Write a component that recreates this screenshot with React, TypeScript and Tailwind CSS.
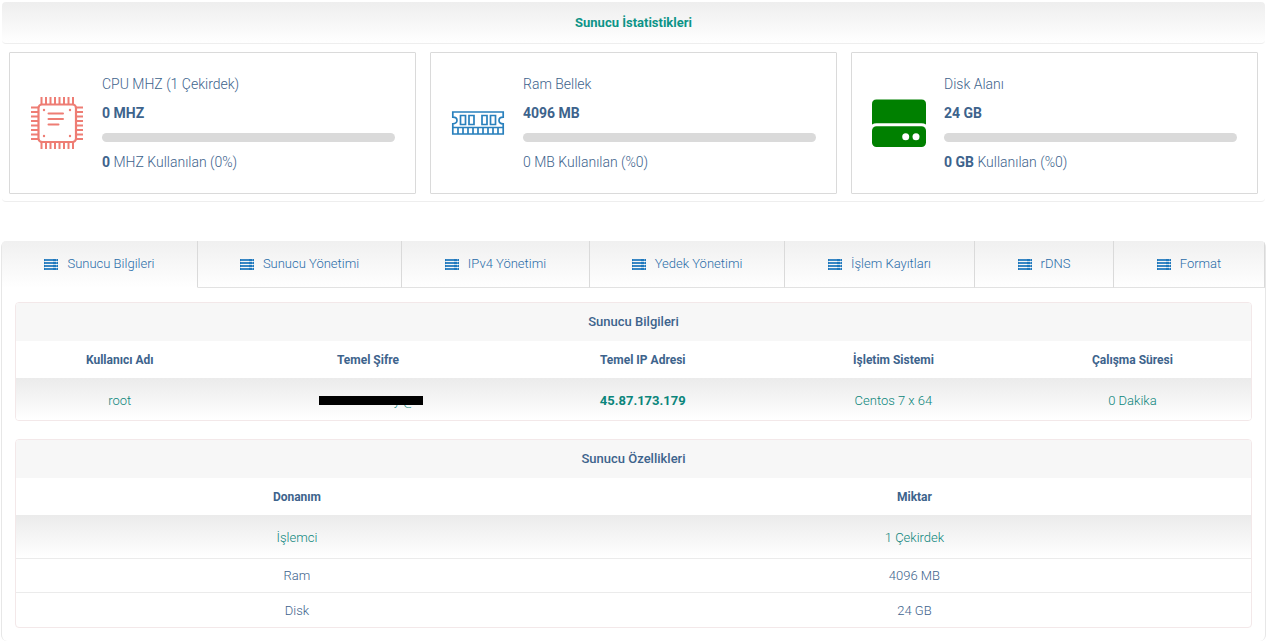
import type { ReactNode } from 'react';

function CpuIcon() {
  const pins = [11.5, 16, 20.5, 25, 29.5, 34, 38.5, 43];
  return (
    <svg viewBox="0 1 54 54" className="h-[54px] w-[54px] shrink-0" fill="none" stroke="#ee7d74" aria-hidden="true">
      {pins.map((p) => (
        <path key={p} strokeWidth="2" d={`M${p} 1v7M${p} 46v7M1 ${p}h7M46 ${p}h7`} />
      ))}
      <rect x="8.5" y="8.5" width="37.500" height="37.500" rx="3.500" strokeWidth="2.200" fill="#fff" />
      <path strokeWidth="2" strokeLinecap="round" d="M18.5 17.500h14.500M18.5 23h14.500M18.5 28.500h10" />
      <g fill="#ee7d74" stroke="none">
        <circle cx="14" cy="14" r="1.200" />
        <circle cx="40" cy="14" r="1.200" />
        <circle cx="14" cy="40" r="1.200" />
        <circle cx="40" cy="40" r="1.200" />
      </g>
    </svg>
  );
}

function RamIcon() {
  return (
    <svg viewBox="0 1 54 54" className="h-[54px] w-[54px] shrink-0" fill="none" stroke="#2980bd" strokeWidth="1.700" aria-hidden="true">
      <path d="M1.800 16h50.400v5.200c-2.400 0-4.200 1.200-4.200 3.300s1.800 3.300 4.200 3.300V38H1.800V27.800c2.400 0 4.200-1.200 4.200-3.300s-1.800-3.300-4.200-3.300z" />
      <path d="M1.800 31.500h50.400M7 31.500v6.500M12 31.500v6.500M17 31.500v6.500M22 31.500v6.500M27 31.500v6.500M32 31.500v6.500M37 31.500v6.500M42 31.500v6.500M47 31.500v6.500" />
      <path d="M9.500 19.500h5v9h-5zM18 19.500h5v9h-5zM31 19.500h5v9h-5zM39.500 19.500h5v9h-5z" />
    </svg>
  );
}

function DiskIcon() {
  return (
    <svg viewBox="0 1 54 54" className="h-[54px] w-[54px] shrink-0" fill="#008000" aria-hidden="true">
      <path d="M0 28.500V8q0-4.500 4.500-4.500h45Q54 3.500 54 8v20.500Q52 27.300 49.500 27.300h-45Q2 27.300 0 28.500z" />
      <rect x="0" y="30.300" width="54" height="20.700" rx="4.500" />
      <circle cx="33.700" cy="40.700" r="3.500" fill="#fff" />
      <circle cx="44" cy="40.700" r="3.500" fill="#fff" />
    </svg>
  );
}

function TabIcon() {
  const rows = [0, 3, 6, 9];
  return (
    <svg viewBox="0 0 14 11" className="h-[11px] w-[14px] shrink-0" fill="#1f78bd" aria-hidden="true">
      {rows.map((y) => (
        <g key={y}>
          <rect x="0" y={y} width="14" height="2" />
          <rect x="1" y={y + 0.6} width="8" height="0.800" fill="#fff" opacity="0.300" />
          <rect x="12" y={y + 0.4} width="1" height="1" fill="#fff" opacity="0.500" />
        </g>
      ))}
      <path d="M0 2h1v7H0zM13 2h1v7h-1zM9 2h3v7H9z" opacity="0.200" />
    </svg>
  );
}

function StatCard({ icon, label, total, used }: { icon: ReactNode; label: string; total: string; used: ReactNode }) {
  return (
    <div className="flex items-center gap-[18px] rounded-[1px] border border-[#dadada] px-5 pt-[17px] pb-4">
      {icon}
      <div className="min-w-0 flex-1 text-sm leading-[29px]">
        <p>{label}</p>
        <p className="font-bold">{total}</p>
        <div className="mt-[5px] mb-1.5 h-[9px] rounded-full bg-[#dadada]" />
        <p>{used}</p>
      </div>
    </div>
  );
}

const tabs = ['Sunucu Bilgileri', 'Sunucu Yönetimi', 'IPv4 Yönetimi', 'Yedek Yönetimi', 'İşlem Kayıtları', 'rDNS', 'Format'];

function Section({ title, children }: { title: string; children: ReactNode }) {
  return (
    <section className="overflow-hidden rounded border border-[#f3e8e9]">
      <h2 className="bg-[#f7f7f7] text-center text-[13px] leading-[38px] font-medium">{title}</h2>
      {children}
    </section>
  );
}

export default function App() {
  return (
    <div className="bg-white pt-0.5 font-['Roboto',sans-serif] font-light text-[#3d638c]">
      <section className="mr-[3px] ml-0.5 rounded border-b border-[#eeeeee]">
        <h1 className="rounded border-b border-[#eeeeee] bg-linear-to-b from-[#eeeeee] to-white text-center text-[13px] leading-[41px] font-bold text-[#0d9488]">
          Sunucu İstatistikleri
        </h1>
        <div className="grid grid-cols-3 gap-[14px] px-[7px] pt-2 pb-[7px]">
          <StatCard
            icon={<CpuIcon />}
            label="CPU MHZ (1 Çekirdek)"
            total="0 MHZ"
            used={<><b className="font-bold">0</b> MHZ Kullanılan (0%)</>}
          />
          <StatCard icon={<RamIcon />} label="Ram Bellek" total="4096 MB" used="0 MB Kullanılan (%0)" />
          <StatCard
            icon={<DiskIcon />}
            label="Disk Alanı"
            total="24 GB"
            used={<><b className="font-bold">0 GB</b> Kullanılan (%0)</>}
          />
        </div>
      </section>

      <section className="mt-[39px] mr-0.5 ml-px rounded-md border-x border-[#e7e7e7]">
        <nav className="grid grid-cols-[196fr_204fr_188fr_195fr_190fr_139fr_151fr] overflow-hidden rounded-t bg-linear-to-b from-[#f0f0f0] to-white">
          {tabs.map((tab, i) => (
            <a
              key={tab}
              href="#"
              className={`flex h-[47px] items-center justify-center gap-[9px] border-r border-b border-r-[#dadada] text-[13px] text-[#296ca8] ${i === 0 ? 'border-b-transparent' : 'border-b-[#e2e2e2]'}`}
            >
              <TabIcon />
              {tab}
            </a>
          ))}
        </nav>
        <div className="flex flex-col gap-[18px] px-[13px] pt-[14px] pb-[13px]">
          <Section title="Sunucu Bilgileri">
            <table className="w-full table-fixed text-center text-[13px] [&_td]:pt-1">
              <colgroup>
                <col className="w-[16.800%]" />
                <col className="w-[23.400%]" />
                <col className="w-[21.100%]" />
                <col className="w-[19.500%]" />
                <col className="w-[19.200%]" />
              </colgroup>
              <thead>
                <tr className="h-[37px] text-xs">
                  <th className="font-bold">Kullanıcı Adı</th>
                  <th className="font-bold">Temel Şifre</th>
                  <th className="font-bold">Temel IP Adresi</th>
                  <th className="font-bold">İşletim Sistemi</th>
                  <th className="font-bold">Çalışma Süresi</th>
                </tr>
              </thead>
              <tbody>
                <tr className="h-[42px] bg-linear-to-b from-[#ebebeb] to-white text-[#0b857b]">
                  <td>root</td>
                  <td className="pl-1.5">
                    <span className="relative inline-block w-[104px] pr-2 text-right">
                      y @
                      <span className="absolute inset-x-0 top-[5px] h-[9px] bg-black" />
                    </span>
                  </td>
                  <td className="font-bold">45.87.173.179</td>
                  <td>Centos 7 x 64</td>
                  <td>0 Dakika</td>
                </tr>
              </tbody>
            </table>
          </Section>
          <Section title="Sunucu Özellikleri">
            <table className="w-full table-fixed text-center text-[13px] [&_td]:pt-0.5">
              <colgroup>
                <col className="w-[45.500%]" />
                <col className="w-[54.500%]" />
              </colgroup>
              <thead>
                <tr className="h-[37px] text-xs">
                  <th className="font-bold">Donanım</th>
                  <th className="font-bold">Miktar</th>
                </tr>
              </thead>
              <tbody>
                <tr className="h-[43px] bg-linear-to-b from-[#ebebeb] to-white text-[#0b857b]">
                  <td>İşlemci</td>
                  <td>1 Çekirdek</td>
                </tr>
                <tr className="h-[34px] border-t border-[#ebebeb]">
                  <td>Ram</td>
                  <td>4096 MB</td>
                </tr>
                <tr className="h-[35px] border-t border-[#ebebeb]">
                  <td>Disk</td>
                  <td>24 GB</td>
                </tr>
              </tbody>
            </table>
          </Section>
        </div>
      </section>
    </div>
  );
}
